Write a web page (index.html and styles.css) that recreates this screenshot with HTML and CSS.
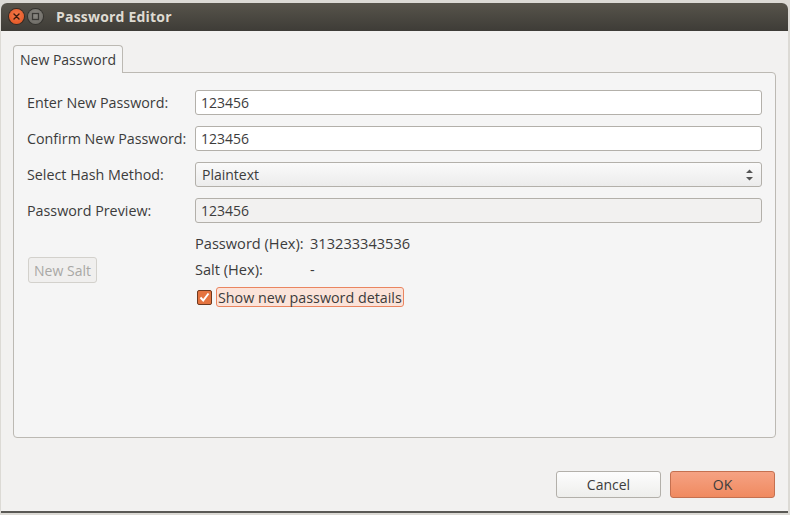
FILE: index.html
```html
<!DOCTYPE html>
<html>
<head>
<meta charset="utf-8">
<link rel="stylesheet" href="styles.css">
</head>
<body>
<div class="window">
  <div class="titlebar">
    <span class="wbtn close"><svg width="15" height="15" viewBox="0 0 15 15"><path d="M5 5 L10 10 M10 5 L5 10" stroke="#3b1a0c" stroke-width="1.4" stroke-linecap="round"/></svg></span>
    <span class="wbtn max"><svg width="15" height="15" viewBox="0 0 15 15"><rect x="4.5" y="4.5" width="6" height="6" fill="none" stroke="#3a3935" stroke-width="1.3"/></svg></span>
    <span class="title">Password Editor</span>
  </div>
  <div class="body">
    <div class="tabs"><div class="tab">New Password</div></div>
    <div class="panel">
      <div class="form">
        <label class="lbl">Enter New Password:</label>
        <div class="entry">123456</div>
        <label class="lbl">Confirm New Password:</label>
        <div class="entry">123456</div>
        <label class="lbl">Select Hash Method:</label>
        <div class="combo"><span>Plaintext</span>
          <svg class="arrows" width="9" height="14" viewBox="0 0 9 14"><path d="M1 5 L4.5 1.5 L8 5 Z M1 9 L4.5 12.5 L8 9 Z" fill="#555"/></svg>
        </div>
        <label class="lbl">Password Preview:</label>
        <div class="entry readonly">123456</div>
      </div>
      <div class="details">
        <div class="saltcol"><button class="btn-disabled">New Salt</button></div>
        <div class="info">
          <div class="kv"><span class="k">Password (Hex):</span><span class="v">313233343536</span></div>
          <div class="kv"><span class="k">Salt (Hex):</span><span class="v">-</span></div>
          <div class="check">
            <span class="cbox"><svg width="15" height="15" viewBox="0 0 15 15"><path d="M3.5 7.5 L6.2 10.5 L11.5 3.5" fill="none" stroke="#fff" stroke-width="2"/></svg></span>
            <span class="clabel">Show new password details</span>
          </div>
        </div>
      </div>
    </div>
    <div class="actions">
      <button class="btn">Cancel</button>
      <button class="btn ok">OK</button>
    </div>
  </div>
</div>
</body>
</html>
```
FILE: styles.css
```css
html, body {
  margin: 0;
  padding: 0;
}
body {
  width: 790px;
  height: 515px;
  background: #dcdad5;
  overflow: hidden;
  font-family: "Open Sans", "Noto Sans", sans-serif;
  font-size: 14px;
  color: #3c3c3c;
}
.window {
  margin: 3px 0 0 1px;
  width: 787px;
  height: 510px;
  background: #f2f1f0;
  border-radius: 6px 6px 0 0;
  border-bottom: 2px solid #5a5955;
  box-sizing: border-box;
  display: flex;
  flex-direction: column;
}
.titlebar {
  height: 28px;
  flex: none;
  background: linear-gradient(#57544b, #3e3c37);
  border-radius: 6px 6px 0 0;
  display: flex;
  align-items: center;
  padding-left: 8px;
  padding-bottom: 1px;
  box-sizing: border-box;
}
.wbtn {
  width: 15px;
  height: 15px;
  border-radius: 50%;
  display: flex;
  margin-right: 4px;
}
.close {
  background: radial-gradient(circle at 50% 40%, #f5794a, #e0501d);
  box-shadow: 0 0 0 1px #3a2a22;
}
.max {
  background: radial-gradient(circle at 50% 40%, #8b8983, #66645e);
  box-shadow: 0 0 0 1px #34332f;
}
.title {
  margin-left: 9px;
  font-weight: bold;
  font-size: 14px;
  color: #dfdbd2;
  letter-spacing: 0.2px;
}
.body {
  flex: 1;
  padding: 14px 12px 13px 12px;
  display: flex;
  flex-direction: column;
}
.tabs {
  display: flex;
  height: 27px;
  position: relative;
  z-index: 1;
}
.tab {
  width: 110px;
  box-sizing: border-box;
  border: 1px solid #bcb9b3;
  border-bottom: none;
  border-radius: 4px 4px 0 0;
  background: #f5f5f5;
  padding: 4px 0 0 6px;
  font-size: 14px;
  height: 28px;
}
.panel {
  height: 366px;
  box-sizing: border-box;
  border: 1px solid #bcb9b3;
  border-radius: 0 4px 4px 4px;
  background: #f5f5f5;
  padding: 17px 13px 0 13px;
}
.form {
  display: grid;
  grid-template-columns: 168px 1fr;
  grid-auto-rows: 25px;
  row-gap: 11px;
  align-items: center;
}
.lbl {
  font-size: 14.3px;
  white-space: nowrap;
}
.entry, .combo {
  height: 25px;
  box-sizing: border-box;
  border: 1px solid #b3b0aa;
  border-radius: 3px;
  background: #fff;
  padding: 0 5px;
  display: flex;
  align-items: center;
  font-size: 14px;
}
.entry.readonly {
  background: #f2f1f0;
}
.combo {
  background: linear-gradient(#fafafa, #ececec);
  justify-content: space-between;
  padding: 0 6px 0 6px;
}
.arrows {
  margin-right: 1px;
}
.details {
  display: flex;
  margin-top: 7px;
}
.saltcol {
  width: 168px;
  display: flex;
  align-items: center;
  padding-left: 1px;
}
.btn-disabled {
  font-family: inherit;
  font-size: 14px;
  color: #a9a8a5;
  background: #f0efee;
  border: 1px solid #d3d1cc;
  border-radius: 3px;
  height: 26px;
  width: 69px;
  padding: 0;
  margin-top: 0;
}
.info {
  display: flex;
  flex-direction: column;
  margin-left: -1px;
}
.kv {
  display: flex;
  height: 26px;
  align-items: center;
  font-size: 14.6px;
}
.k {
  width: 115px;
}
.v {
  padding-left: 0;
}
.check {
  display: flex;
  align-items: center;
  height: 26px;
  margin-top: 2px;
  margin-left: 2px;
}
.cbox {
  width: 15px;
  height: 15px;
  box-sizing: border-box;
  background: #e4733f;
  border: 1px solid #6e3a20;
  border-radius: 2px;
  display: flex;
  align-items: center;
  justify-content: center;
}
.cbox svg {
  flex: none;
}
.clabel {
  margin-left: 4px;
  background: #fbe3d9;
  border: 1px solid #ea8560;
  border-radius: 3px;
  padding: 0 1px 0 1px;
  height: 20px;
  box-sizing: border-box;
  display: flex;
  align-items: center;
  font-size: 14.3px;
}
.actions {
  margin-top: auto;
  display: flex;
  justify-content: flex-end;
  gap: 9px;
  padding-right: 1px;
}
.btn {
  font-family: inherit;
  font-size: 14px;
  color: #3c3c3c;
  width: 105px;
  height: 27px;
  box-sizing: border-box;
  border: 1px solid #b3b0aa;
  border-radius: 3px;
  background: linear-gradient(#fdfdfd, #eeeeec);
  padding: 0;
}
.btn.ok {
  background: linear-gradient(#f5a283, #f08a60);
  border-color: #c47050;
}
```
